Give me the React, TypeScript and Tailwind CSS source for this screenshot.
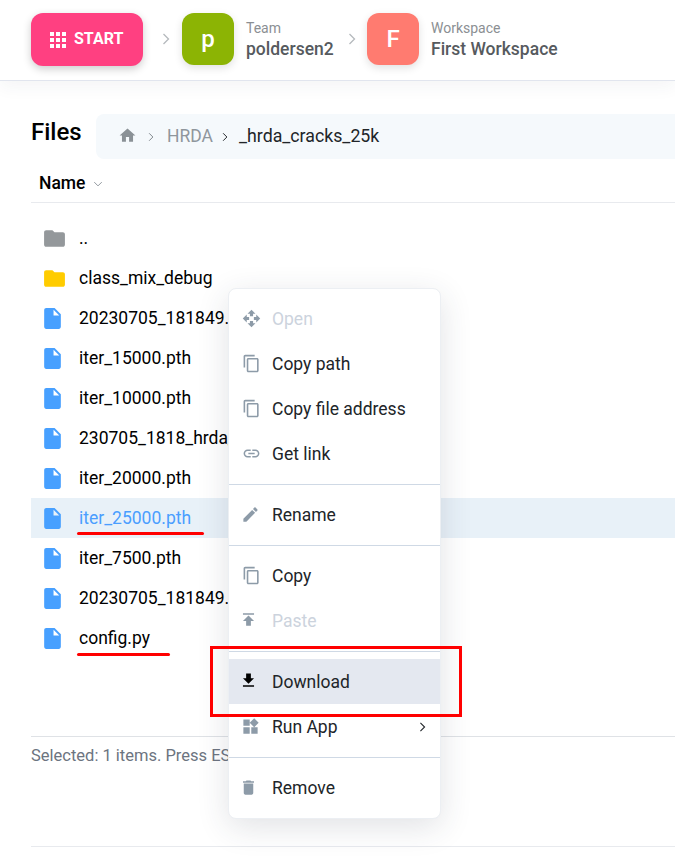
const icons = {
  apps: 'M4 8h4V4H4v4zm6 12h4v-4h-4v4zm-6 0h4v-4H4v4zm0-6h4v-4H4v4zm6 0h4v-4h-4v4zm6-10v4h4V4h-4zm-6 4h4V4h-4v4zm6 6h4v-4h-4v4zm0 6h4v-4h-4v4z',
  home: 'M10 20v-6h4v6h5v-8h3L12 3 2 12h3v8z',
  folder: 'M10 4H4c-1.1 0-1.99.9-1.99 2L2 18c0 1.1.9 2 2 2h16c1.1 0 2-.9 2-2V8c0-1.1-.9-2-2-2h-8l-2-2z',
  file: 'M6 2c-1.1 0-1.99.9-1.99 2L4 20c0 1.1.89 2 1.99 2H18c1.1 0 2-.9 2-2V8l-6-6H6zm7 7V3.5L18.5 9H13z',
  open: 'M10 9h4V6h3l-5-5-5 5h3v3zm-1 1H6V7l-5 5 5 5v-3h3v-4zm14 2l-5-5v3h-3v4h3v3l5-5zm-9 3h-4v3H7l5 5 5-5h-3v-3z',
  copy: 'M16 1H4c-1.1 0-2 .9-2 2v14h2V3h12V1zm3 4H8c-1.1 0-2 .9-2 2v14c0 1.1.9 2 2 2h11c1.1 0 2-.9 2-2V7c0-1.1-.9-2-2-2zm0 16H8V7h11v14z',
  link: 'M3.9 12c0-1.71 1.39-3.1 3.1-3.1h4V7H7c-2.76 0-5 2.24-5 5s2.24 5 5 5h4v-1.9H7c-1.71 0-3.1-1.39-3.1-3.1zM8 13h8v-2H8v2zm9-6h-4v1.9h4c1.71 0 3.1 1.39 3.1 3.1s-1.39 3.1-3.1 3.1h-4V17h4c2.76 0 5-2.24 5-5s-2.24-5-5-5z',
  edit: 'M3 17.25V21h3.75L17.81 9.94l-3.75-3.75L3 17.25zM20.71 7.04c.39-.39.39-1.02 0-1.41l-2.34-2.34c-.39-.39-1.02-.39-1.41 0l-1.83 1.83 3.75 3.75 1.83-1.83z',
  paste: 'M5 4v2h14V4H5zm0 10h4v6h6v-6h4l-7-7-7 7z',
  download: 'M19 9h-4V3H9v6H5l7 7 7-7zM5 18v2h14v-2H5z',
  widgets: 'M13 13v8h8v-8h-8zM3 21h8v-8H3v8zM3 3v8h8V3H3zm13.66-1.31L11 7.34 16.66 13l5.66-5.66-5.66-5.65z',
  remove: 'M6 19c0 1.1.9 2 2 2h8c1.1 0 2-.9 2-2V7H6v12zM19 4h-3.5l-1-1h-5l-1 1H5v2h14V4z',
};

type IconName = keyof typeof icons;

function Icon({ name, className }: { name: IconName; className: string }) {
  return (
    <svg viewBox="0 0 24 24" fill="currentColor" fillRule="evenodd" className={className}>
      <path d={icons[name]} />
    </svg>
  );
}

function Chevron({ className }: { className: string }) {
  return (
    <svg viewBox="0 0 8 12" fill="none" stroke="currentColor" strokeWidth="1.3" className={className}>
      <path d="M1.5 1l5 5-5 5" />
    </svg>
  );
}

const rows: { name: string; icon: IconName; color: string; selected?: boolean }[] = [
  { name: '..', icon: 'folder', color: 'text-[#94989b] -translate-x-[1px]' },
  { name: 'class_mix_debug', icon: 'folder', color: 'text-[#ffcc00] -translate-x-[1px]' },
  { name: '20230705_181849.log', icon: 'file', color: 'text-[#47a0ff] -translate-x-[3px]' },
  { name: 'iter_15000.pth', icon: 'file', color: 'text-[#47a0ff] -translate-x-[3px]' },
  { name: 'iter_10000.pth', icon: 'file', color: 'text-[#47a0ff] -translate-x-[3px]' },
  { name: '230705_1818_hrda_cracks', icon: 'file', color: 'text-[#47a0ff] -translate-x-[3px]' },
  { name: 'iter_20000.pth', icon: 'file', color: 'text-[#47a0ff] -translate-x-[3px]' },
  { name: 'iter_25000.pth', icon: 'file', color: 'text-[#47a0ff] -translate-x-[3px]', selected: true },
  { name: 'iter_7500.pth', icon: 'file', color: 'text-[#47a0ff] -translate-x-[3px]' },
  { name: '20230705_181849.log.json', icon: 'file', color: 'text-[#47a0ff] -translate-x-[3px]' },
  { name: 'config.py', icon: 'file', color: 'text-[#47a0ff] -translate-x-[3px]' },
];

// the glyphs in the menu are left aligned, so narrow ones get pulled back
const menuIconOffset: Partial<Record<IconName, string>> = {
  edit: '-translate-x-[1px]',
  widgets: '-translate-x-[1px]',
  download: '-translate-x-[3px] -translate-y-[1px]',
  paste: '-translate-x-[3px] -translate-y-[1px]',
  remove: '-translate-x-[3px]',
};

function MenuItem({
  icon,
  label,
  disabled,
  active,
  arrow,
}: {
  icon: IconName;
  label: string;
  disabled?: boolean;
  active?: boolean;
  arrow?: boolean;
}) {
  return (
    <div className={`flex h-[45px] items-center pl-[13px] pr-[14px] ${active ? 'bg-[#e4e8f0]' : ''}`}>
      <Icon
        name={icon}
        className={`h-[19px] w-[19px] shrink-0 ${menuIconOffset[icon] ?? ''} ${active ? 'text-black' : 'text-[#8d9ba8]'}`}
      />
      <span className={`mt-[2px] ml-[11px] flex-1 text-[17.5px] ${disabled ? 'text-[#ccd3dd]' : 'text-[#212529]'}`}>{label}</span>
      {arrow && <Chevron className="h-[10px] w-[7px] text-[#212529]" />}
    </div>
  );
}

function MenuGroup({ children }: { children: React.ReactNode }) {
  return <div className="border-b border-[#cfd9e5] pt-[7px] pb-[8px] last:border-b-0">{children}</div>;
}

export default function App() {
  return (
    <div className="relative h-[860px] w-[675px] overflow-hidden bg-white font-['Roboto',sans-serif]">
      <header className="flex h-[81px] items-start border-b border-[#e1e5ee] pt-[13px] pl-[31px] shadow-[0_6px_16px_rgba(40,50,70,0.05)]">
        <div className="flex h-[53px] w-[112px] items-center gap-[4px] rounded-xl bg-[#ff4081] pl-[15px] text-white shadow-[0_3px_8px_rgba(0,0,0,0.2)]">
          <Icon name="apps" className="h-[24px] w-[24px]" />
          <span className="-mt-[2px] text-[16px] font-bold">START</span>
        </div>
        <Chevron className="mt-[19px] ml-[19px] h-[14px] w-[8px] text-[#b5b9bd]" />
        <div className="ml-[12px] flex h-[52px] w-[52px] items-center justify-center rounded-xl bg-[#8cb404] text-[24px] font-medium text-white shadow-[0_3px_8px_rgba(0,0,0,0.12)]">
          p
        </div>
        <div className="ml-[12px] w-[88px]">
          <div className="mt-[5px] text-[14px] leading-[21px] text-[#8b8f93]">Team</div>
          <div className="text-[17.5px] leading-[20px] font-medium text-[#565a5e]">poldersen2</div>
        </div>
        <Chevron className="mt-[19px] ml-[14px] h-[14px] w-[8px] text-[#b5b9bd]" />
        <div className="ml-[11px] flex h-[52px] w-[52px] items-center justify-center rounded-xl bg-[#ff7b70] text-[24px] font-medium text-white shadow-[0_3px_8px_rgba(0,0,0,0.12)]">
          F
        </div>
        <div className="ml-[12px]">
          <div className="mt-[5px] text-[14px] leading-[21px] text-[#8b8f93]">Workspace</div>
          <div className="text-[17.5px] leading-[20px] font-medium text-[#565a5e]">First Workspace</div>
        </div>
      </header>

      <main className="pl-[31px]">
        <div className="flex items-start pt-[33px]">
          <h1 className="mt-[2px] w-[65px] text-[24px] leading-[32px] font-medium text-black">Files</h1>
          <div className="flex h-[45px] flex-1 items-center rounded-l-lg bg-[#f5f9fc] pl-[22px] text-[17.5px]">
            <Icon name="home" className="-mt-[2px] h-[19px] w-[19px] text-[#8a9196]" />
            <Chevron className="ml-[11px] h-[10px] w-[6px] text-[#7f868c]" />
            <span className="ml-[13px] text-[#8f969c]">HRDA</span>
            <Chevron className="ml-[9px] h-[10px] w-[6px] text-[#212529]" />
            <span className="ml-[11px] text-[17.75px] text-[#212529]">_hrda_cracks_25k</span>
          </div>
        </div>

        <div className="flex h-[44px] items-center border-b border-[#e8eaee] pt-[6px] pl-[8px]">
          <span className="text-[17.5px] font-medium text-black">Name</span>
          <Chevron className="ml-[10px] h-[10px] w-[6px] rotate-90 text-[#8f969c]" />
        </div>

        <div className="pt-[15px]">
          {rows.map((row) => (
            <div
              key={row.name}
              className={`flex h-[40px] items-center pl-[12px] whitespace-nowrap ${row.selected ? 'bg-[#e8f1f8] text-[#4a9eff]' : 'text-black'}`}
            >
              <Icon name={row.icon} className={`h-[25px] w-[25px] shrink-0 ${row.color}`} />
              <span className="ml-[11px] text-[17.5px]">{row.name}</span>
            </div>
          ))}
        </div>

        <div className="mt-[78px] flex h-[38px] items-center border-t border-[#dfe2e6] pt-[2px] text-[16.5px] whitespace-nowrap text-[#6c7480]">
          Selected: 1 items. Press ESC to cancel
        </div>
        <div className="mt-[72px] border-t border-[#e8eaee]" />
      </main>

      <div className="absolute top-[288px] left-[228px] w-[213px] overflow-hidden rounded-lg border border-[#eceff3] bg-white shadow-[0_8px_32px_rgba(40,50,70,0.14)]">
        <MenuGroup>
          <MenuItem icon="open" label="Open" disabled />
          <MenuItem icon="copy" label="Copy path" />
          <MenuItem icon="copy" label="Copy file address" />
          <MenuItem icon="link" label="Get link" />
        </MenuGroup>
        <MenuGroup>
          <MenuItem icon="edit" label="Rename" />
        </MenuGroup>
        <MenuGroup>
          <MenuItem icon="copy" label="Copy" />
          <MenuItem icon="paste" label="Paste" disabled />
        </MenuGroup>
        <MenuGroup>
          <MenuItem icon="download" label="Download" active />
          <MenuItem icon="widgets" label="Run App" arrow />
        </MenuGroup>
        <MenuGroup>
          <MenuItem icon="remove" label="Remove" />
        </MenuGroup>
      </div>

      <div className="absolute top-[532px] left-[77px] h-[3px] w-[127px] rounded-full bg-[#ff0000]" />
      <div className="absolute top-[653px] left-[77px] h-[3px] w-[93px] rounded-full bg-[#ff0000]" />
      <div className="absolute top-[646px] left-[210px] h-[71px] w-[252px] border-[3px] border-[#ff0000]" />
    </div>
  );
}
